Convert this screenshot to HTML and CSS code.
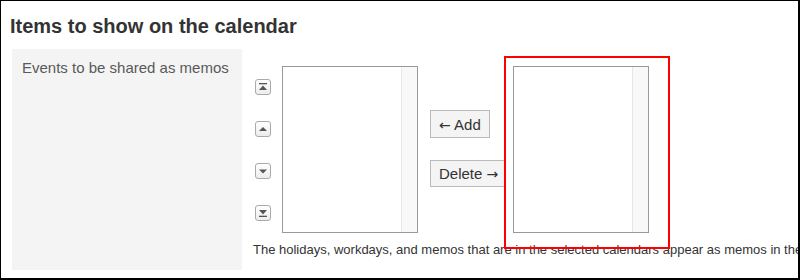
FILE: index.html
```html
<!DOCTYPE html>
<html lang="en">
<head>
<meta charset="utf-8">
<title>Items to show on the calendar</title>
<link rel="stylesheet" href="styles.css">
</head>
<body>
<div class="frame">
  <h2 class="title">Items to show on the calendar</h2>
  <div class="row">
    <div class="label-cell">Events to be shared as memos</div>
    <div class="value-cell">
      <div class="picker">
        <div class="order-col">
          <button class="order-btn" type="button" aria-label="Move to top">
            <svg width="14" height="14" viewBox="0 0 14 14"><rect x="3" y="3" width="8" height="1.3" fill="#555"/><path d="M3 10 L7 5.5 L11 10 Z" fill="#555"/></svg>
          </button>
          <button class="order-btn" type="button" aria-label="Move up">
            <svg width="14" height="14" viewBox="0 0 14 14"><path d="M3 9 L7 5 L11 9 Z" fill="#555"/></svg>
          </button>
          <button class="order-btn" type="button" aria-label="Move down">
            <svg width="14" height="14" viewBox="0 0 14 14"><path d="M3 5.5 L7 9.5 L11 5.5 Z" fill="#555"/></svg>
          </button>
          <button class="order-btn" type="button" aria-label="Move to bottom">
            <svg width="14" height="14" viewBox="0 0 14 14"><path d="M3 4 L7 8.5 L11 4 Z" fill="#555"/><rect x="3" y="9.7" width="8" height="1.3" fill="#555"/></svg>
          </button>
        </div>
        <div class="listbox"><div class="scroll-track"></div></div>
        <div class="action-col">
          <button class="action-btn add" type="button"><span class="arrow">←</span> Add</button>
          <button class="action-btn del" type="button">Delete <span class="arrow">→</span></button>
        </div>
        <div class="listbox target">
          <div class="scroll-track"></div>
          <div class="highlight"></div>
        </div>
      </div>
      <p class="note">The holidays, workdays, and memos that are in the selected calendars appear as memos in the</p>
    </div>
  </div>
</div>
</body>
</html>
```

FILE: styles.css
```css
html, body {
  margin: 0;
  padding: 0;
  background: #fff;
}

.frame {
  width: 800px;
  height: 280px;
  box-sizing: border-box;
  border-top: 1px solid #000;
  border-left: 1px solid #000;
  border-right: 2px solid #000;
  border-bottom: 2px solid #000;
  overflow: hidden;
  font-family: "Liberation Sans", Arial, sans-serif;
  color: #333;
}

.title {
  margin: 14px 0 0 9px;
  font-size: 20px;
  font-weight: bold;
  line-height: 23px;
  color: #333;
}

.row {
  display: flex;
  margin: 11px 0 0 11px;
}

.label-cell {
  width: 230px;
  flex: none;
  box-sizing: border-box;
  background: #f4f4f4;
  padding: 10px 0 0 10px;
  font-size: 15px;
  line-height: 17px;
  color: #595959;
}

.value-cell {
  padding: 17px 0 13px 13px;
  flex: none;
}

.picker {
  display: flex;
  align-items: flex-start;
}

.order-col {
  display: flex;
  flex-direction: column;
  gap: 26px;
  padding-top: 13px;
  margin-right: 11px;
}

.order-btn {
  width: 16px;
  height: 16px;
  box-sizing: border-box;
  padding: 0;
  margin: 0;
  border: 1px solid #aaa;
  border-radius: 3px;
  background: linear-gradient(#fff, #ececec);
  display: flex;
  align-items: center;
  justify-content: center;
}

.order-btn svg {
  display: block;
}

.listbox {
  position: relative;
  width: 136px;
  height: 167px;
  box-sizing: border-box;
  border: 1px solid #999;
  background: #fff;
  flex: none;
}

.scroll-track {
  position: absolute;
  top: 0;
  right: 0;
  bottom: 0;
  width: 15px;
  background: #f8f8f8;
  border-left: 1px solid #e6e6e6;
}

.action-col {
  display: flex;
  flex-direction: column;
  align-items: flex-start;
  gap: 22px;
  padding-top: 44px;
  margin-left: 12px;
  width: 76px;
  margin-right: 7px;
  flex: none;
}

.action-btn {
  box-sizing: border-box;
  margin: 0;
  padding: 0 0 0 8px;
  border: 1px solid #bbb;
  background: #f4f4f4;
  font-family: "Liberation Sans", Arial, sans-serif;
  font-size: 15px;
  color: #333;
  text-align: left;
  white-space: nowrap;
}

.arrow {
  font-family: "DejaVu Sans", sans-serif;
  font-size: 14px;
}

.action-btn.add {
  width: 60px;
  height: 28px;
}

.action-btn.del {
  width: 76px;
  height: 27px;
}

.highlight {
  position: absolute;
  left: -10px;
  top: -11px;
  width: 166px;
  height: 193px;
  box-sizing: border-box;
  border: 2px solid #f00;
}

.note {
  margin: 9px 0 0 -2px;
  font-size: 13px;
  line-height: 15px;
  color: #333;
  white-space: nowrap;
}
```
